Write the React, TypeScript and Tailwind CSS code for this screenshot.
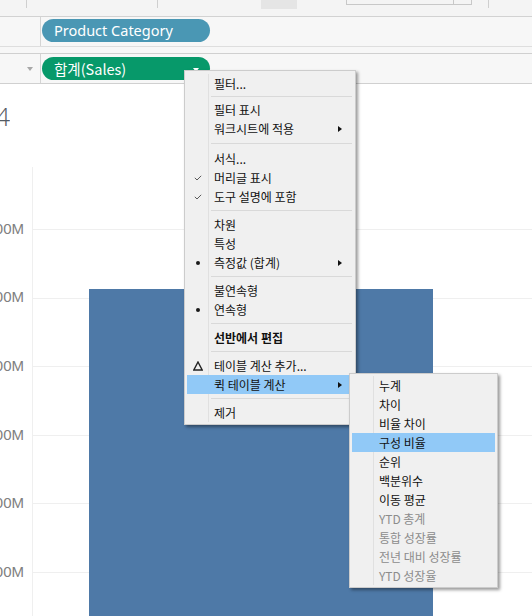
import type { ReactNode } from 'react';

type Mark = 'check' | 'dot' | 'delta';
type Sep = 'sep' | 'sep-s' | 'sep-l';
type MenuItem =
  | { label: string; mark?: Mark; arrow?: boolean; bold?: boolean; active?: boolean; disabled?: boolean }
  | Sep;

const mainMenu: MenuItem[] = [
  { label: '필터...' },
  'sep-s',
  { label: '필터 표시' },
  { label: '워크시트에 적용', arrow: true },
  'sep-l',
  { label: '서식...' },
  { label: '머리글 표시', mark: 'check' },
  { label: '도구 설명에 포함', mark: 'check' },
  'sep',
  { label: '차원' },
  { label: '특성' },
  { label: '측정값 (합계)', mark: 'dot', arrow: true },
  'sep',
  { label: '불연속형' },
  { label: '연속형', mark: 'dot' },
  'sep',
  { label: '선반에서 편집', bold: true },
  'sep',
  { label: '테이블 계산 추가...', mark: 'delta' },
  { label: '퀵 테이블 계산', arrow: true, active: true },
  'sep',
  { label: '제거' },
];

const quickCalc: MenuItem[] = [
  { label: '누계' },
  { label: '차이' },
  { label: '비율 차이' },
  { label: '구성 비율', active: true },
  { label: '순위' },
  { label: '백분위수' },
  { label: '이동 평균' },
  { label: 'YTD 총계', disabled: true },
  { label: '통합 성장률', disabled: true },
  { label: '전년 대비 성장률', disabled: true },
  { label: 'YTD 성장율', disabled: true },
];

const ticks = ['3,500M', '3,000M', '2,500M', '2,000M', '1,500M', '1,000M'];

const sepClass: Record<Sep, string> = {
  sep: 'h-[9px] pt-[4px]',
  'sep-s': 'h-[7px] pt-[3px]',
  'sep-l': 'h-[11px] pt-[5px]',
};

function MarkIcon({ mark }: { mark?: Mark }) {
  if (mark === 'check')
    return (
      <svg width="8" height="6" viewBox="0 0 8 6">
        <path d="M0.8 2.8 L3 5 L7.2 0.8" fill="none" stroke="#5a5a5a" strokeWidth="1" />
      </svg>
    );
  if (mark === 'dot') return <span className="block h-[4px] w-[4px] rounded-full bg-[#1a1a1a]" />;
  if (mark === 'delta')
    return (
      <svg width="10" height="10" viewBox="0 0 10 10">
        <path d="M5 1 L9.2 9 L0.8 9 Z" fill="none" stroke="#222" strokeWidth="1.4" />
      </svg>
    );
  return null;
}

function Menu({ items }: { items: MenuItem[] }): ReactNode {
  return items.map((it, i) =>
    typeof it === 'string' ? (
      <div key={i} className="flex">
        <div className="w-[22px] shrink-0 border-r border-[#e0e0e0]" />
        <div className={`ml-[2px] mr-[1px] flex-1 ${sepClass[it]}`}>
          <div className="h-px bg-[#d9d9d9]" />
        </div>
      </div>
    ) : (
      <div key={i} className={`flex h-[19px] items-center ${it.active ? 'bg-[#91c9f7]' : ''}`}>
        <div
          className={`flex h-full w-[22px] shrink-0 items-center justify-center border-r ${
            it.active ? 'border-transparent' : 'border-[#e0e0e0]'
          }`}
        >
          <MarkIcon mark={it.mark} />
        </div>
        <span
          className={`pl-[5px] text-[12px] leading-none whitespace-nowrap ${
            it.disabled ? 'text-[#8c8c8c]' : 'text-[#111]'
          } ${it.bold ? 'font-bold' : ''}`}
        >
          {it.label}
        </span>
        {it.arrow && (
          <span className="ml-auto mr-[11px] h-0 w-0 border-y-[3.5px] border-l-[4px] border-y-transparent border-l-[#111]" />
        )}
      </div>
    ),
  );
}

export default function App() {
  return (
    <div className="relative h-[616px] w-[532px] overflow-hidden bg-white font-['Noto_Sans_CJK_KR','Noto_Sans',sans-serif]">
      {/* toolbar strip */}
      <div className="flex h-[17px] items-start border-b border-[#d2d2d2] bg-[#f4f4f4]">
        <div className="h-[8px] w-[27px] border-r border-[#cfcfcf]" />
        <div className="h-[8px] w-[131px] border-r border-[#cfcfcf]" />
        <div className="w-[103px]" />
        <div className="h-[9px] w-[36px] bg-[#e5e5e5]" />
        <div className="w-[49px]" />
        <div className="flex h-[5px] w-[126px] border-x border-b border-[#c8c8c8]">
          <div className="h-full w-[107px] border-r border-[#c8c8c8]" />
        </div>
        <div className="h-[8px] w-[17px] border-r border-[#cfcfcf]" />
      </div>

      {/* columns shelf */}
      <div className="flex h-[30px] border-b border-[#dedede] bg-[#f7f7f7]">
        <div className="w-[41px] border-r border-[#d4d4d4]" />
        <div className="ml-[1px] mt-[2px] flex h-[23px] w-[168px] items-center rounded-full bg-[#4a97b4] pl-[12px] font-['Noto_Sans',sans-serif] text-[14.5px] text-white">
          Product Category
        </div>
      </div>
      <div className="h-[6px] bg-[#f7f7f7]" />

      {/* rows shelf */}
      <div className="flex h-[31px] border-y border-[#d0d0d0] bg-[#f7f7f7]">
        <div className="flex w-[41px] items-start justify-end border-r border-[#d4d4d4] pr-[7px] pt-[13px]">
          <span className="h-0 w-0 border-x-[3px] border-t-[4px] border-x-transparent border-t-[#a8a8a8]" />
        </div>
        <div className="ml-[1px] mt-[3px] flex h-[23px] w-[168px] items-center rounded-full bg-[#07996a] pl-[12px] text-[14.5px] text-white">
          <span>합계(Sales)</span>
          <span className="ml-auto mr-[11px] mt-[2px] h-0 w-0 border-x-[3.5px] border-t-[4px] border-x-transparent border-t-white" />
        </div>
      </div>

      {/* chart */}
      <div className="flex h-[532px] flex-col">
        <div className="h-[83px] pt-[19px]">
          <div className="flex w-[10px] justify-end overflow-hidden">
            <span className="font-['Open_Sans',sans-serif] text-[26px] font-light leading-[26px] whitespace-nowrap text-[#555b63]">
              2014
            </span>
          </div>
        </div>
        <div className="flex flex-1">
          <div className="relative w-[32px] shrink-0">
            {ticks.map((t, i) => (
              <div
                key={t}
                className="absolute left-0 flex h-[16px] w-[24px] items-center justify-end overflow-hidden font-['Liberation_Sans',sans-serif] text-[15px] whitespace-nowrap text-[#808080]"
                style={{ top: 62 + i * 68.6 - 8 }}
              >
                {t}
              </div>
            ))}
          </div>
          <div className="relative flex-1 border-l border-[#efefef]">
            {ticks.map((t, i) => (
              <div key={t} className="absolute left-0 right-0 h-px bg-[#efefef]" style={{ top: 62 + i * 68.6 }} />
            ))}
            <div className="absolute bottom-0 left-[56px] top-[122px] w-[344px] bg-[#4e79a7]" />
          </div>
        </div>
      </div>

      {/* context menu */}
      <div className="absolute left-[184px] top-[70px] w-[172px] border border-[#cccccc] bg-[#f0f0f0] px-[2px] pb-[2px] pt-[3px] shadow-[2px_2px_3px_rgba(0,0,0,0.4)]">
        <Menu items={mainMenu} />
      </div>

      {/* quick table calculation submenu */}
      <div className="absolute left-[349px] top-[373px] w-[149px] border border-[#cccccc] bg-[#f0f0f0] p-[2px] shadow-[2px_2px_3px_rgba(0,0,0,0.4)]">
        <Menu items={quickCalc} />
      </div>
    </div>
  );
}
